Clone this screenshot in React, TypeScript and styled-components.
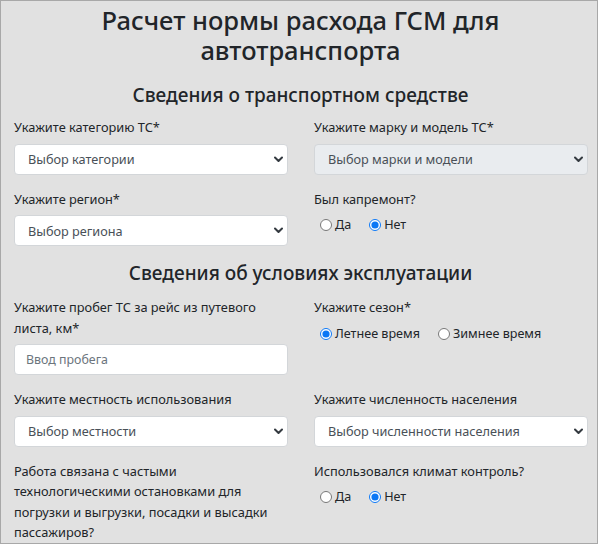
import React from "react";
import styled, { createGlobalStyle } from "styled-components";

const Global = createGlobalStyle`
  html, body { margin: 0; padding: 0; }
  body { font-family: "Noto Sans", "Open Sans", sans-serif; color: #212529; }
  * { box-sizing: border-box; }
`;

const Page = styled.div`
  width: 598px;
  height: 544px;
  border: 1px solid #a8a8a8;
  background: #e1e1e1;
  padding: 0 10px 0 13px;
  overflow: hidden;
`;

const Title = styled.h1`
  margin: 4px 0 0;
  font-size: 25.5px;
  font-weight: 500;
  line-height: 30px;
  text-align: center;
`;

const Subtitle = styled.h2<{ $top: number }>`
  margin: ${(p) => p.$top}px 0 0;
  font-size: 19px;
  font-weight: 500;
  line-height: 24px;
  text-align: center;
`;

const Grid = styled.div<{ $top: number }>`
  display: grid;
  grid-template-columns: 274px 274px;
  column-gap: 26px;
  row-gap: 14px;
  margin-top: ${(p) => p.$top}px;
`;

const Field = styled.div`
  display: flex;
  flex-direction: column;
`;

const Label = styled.div`
  font-size: 12.8px;
  line-height: 20.5px;
  margin-bottom: 6px;
`;

const SelectWrap = styled.div`
  position: relative;
  height: 31px;
`;

const Select = styled.select<{ $muted?: boolean }>`
  appearance: none;
  width: 100%;
  height: 31px;
  border: 1px solid #d3d6d9;
  border-radius: 4px;
  background: ${(p) => (p.$muted ? "#e9ecef" : "#ffffff")};
  color: #495057;
  opacity: 1;
  font-family: inherit;
  font-size: 12.7px;
  padding: 0 24px 0 13px;
  outline: none;
`;

const Chevron = styled.svg`
  position: absolute;
  right: 5px;
  top: 12px;
  width: 9px;
  height: 7px;
  pointer-events: none;
`;

const Input = styled.input`
  width: 100%;
  height: 31px;
  border: 1px solid #d3d6d9;
  border-radius: 4px;
  background: #fff;
  font-family: inherit;
  font-size: 12.4px;
  padding: 0 11px;
  color: #495057;
  outline: none;
  &::placeholder { color: #6c757d; }
`;

const Radios = styled.div`
  display: flex;
  gap: 18px;
  padding-left: 6px;
  margin-top: 0;
`;

const RadioLabel = styled.label`
  display: flex;
  align-items: center;
  gap: 3px;
  font-size: 12.6px;
  line-height: 20px;
  input {
    margin: 0;
    width: 12px;
    height: 12px;
    accent-color: #0b77f5;
  }
`;

function Sel({ text, muted }: { text: string; muted?: boolean }) {
  return (
    <SelectWrap>
      <Select $muted={muted} defaultValue="x" aria-disabled={muted}>
        <option value="x">{text}</option>
      </Select>
      <Chevron viewBox="0 0 9 7">
        <path d="M1 1.5 L4.5 5 L8 1.5" fill="none" stroke="#343a40" strokeWidth="2" strokeLinecap="round" strokeLinejoin="round" />
      </Chevron>
    </SelectWrap>
  );
}

function RadioPair({ name, items, checked }: { name: string; items: string[]; checked: number }) {
  return (
    <Radios>
      {items.map((t, i) => (
        <RadioLabel key={t}>
          <input type="radio" name={name} defaultChecked={i === checked} />
          {t}
        </RadioLabel>
      ))}
    </Radios>
  );
}

export default function App() {
  return (
    <Page>
      <Global />
      <Title>
        Расчет нормы расхода ГСМ для
        <br />
        автотранспорта
      </Title>
      <Subtitle $top={18}>Сведения о транспортном средстве</Subtitle>
      <Grid $top={10}>
        <Field>
          <Label>Укажите категорию ТС*</Label>
          <Sel text="Выбор категории" />
        </Field>
        <Field>
          <Label>Укажите марку и модель ТС*</Label>
          <Sel text="Выбор марки и модели" muted />
        </Field>
        <Field>
          <Label>Укажите регион*</Label>
          <Sel text="Выбор региона" />
        </Field>
        <Field>
          <Label>Был капремонт?</Label>
          <RadioPair name="repair" items={["Да", "Нет"]} checked={1} />
        </Field>
      </Grid>
      <Subtitle $top={15}>Сведения об условиях эксплуатации</Subtitle>
      <Grid $top={12}>
        <Field>
          <Label>
            Укажите пробег ТС за рейс из путевого
            <br />
            листа, км*
          </Label>
          <Input placeholder="Ввод пробега" />
        </Field>
        <Field>
          <Label>Укажите сезон*</Label>
          <RadioPair name="season" items={["Летнее время", "Зимнее время"]} checked={0} />
        </Field>
        <Field>
          <Label>Укажите местность использования</Label>
          <Sel text="Выбор местности" />
        </Field>
        <Field>
          <Label>Укажите численность населения</Label>
          <Sel text="Выбор численности населения" />
        </Field>
        <Field>
          <Label>
            Работа связана с частыми
            <br />
            технологическими остановками для
            <br />
            погрузки и выгрузки, посадки и высадки
            <br />
            пассажиров?
          </Label>
        </Field>
        <Field>
          <Label>Использовался климат контроль?</Label>
          <RadioPair name="climate" items={["Да", "Нет"]} checked={1} />
        </Field>
      </Grid>
    </Page>
  );
}
